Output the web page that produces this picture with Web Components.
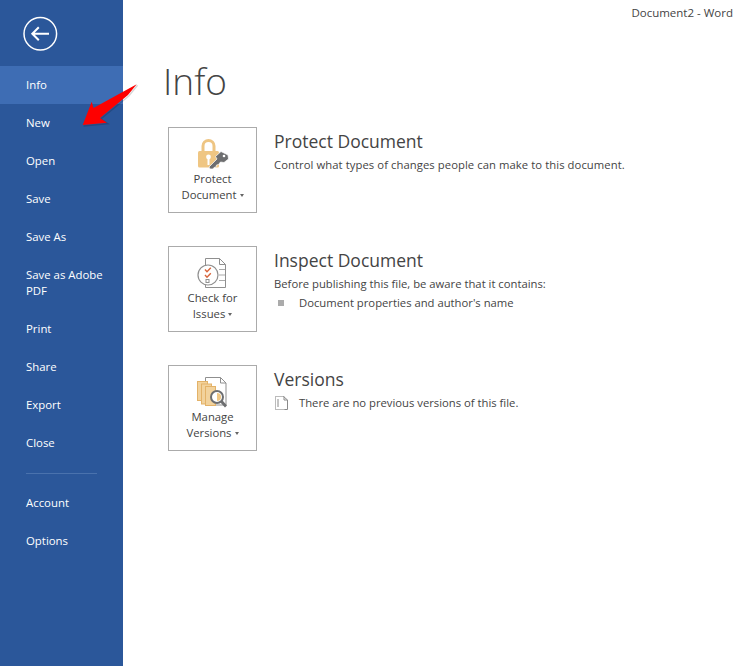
<!DOCTYPE html>
<html><head><meta charset="utf-8"><style>
html,body{margin:0;padding:0;height:100%;background:#fff;overflow:hidden}
body{font-family:"Open Sans","Noto Sans","Liberation Sans",sans-serif;}
</style></head><body>
<info-app>
<back-stage slot="nav">
<nav-item active>Info</nav-item><nav-item>New</nav-item><nav-item>Open</nav-item><nav-item>Save</nav-item><nav-item>Save As</nav-item><nav-item>Save as Adobe PDF</nav-item><nav-item>Print</nav-item><nav-item>Share</nav-item><nav-item>Export</nav-item><nav-item>Close</nav-item>
<nav-rule></nav-rule>
<nav-item>Account</nav-item><nav-item>Options</nav-item>
</back-stage>
<info-section heading="Protect Document" line1="Protect" line2="Document" icon="protect" style="height:119px">
<p-line style="letter-spacing:.07px">Control what types of changes people can make to this document.</p-line>
</info-section>
<info-section heading="Inspect Document" line1="Check for" line2="Issues" icon="inspect" style="height:119px">
<p-line>Before publishing this file, be aware that it contains:</p-line>
<p-line mark="square">Document properties and author's name</p-line>
</info-section>
<info-section heading="Versions" line1="Manage" line2="Versions" icon="versions">
<p-line mark="doc" style="margin-top:1px">There are no previous versions of this file.</p-line>
</info-section>
</info-app>
<script>
const el=(html)=>{const t=document.createElement('template');t.innerHTML=html;return t.content};
class InfoApp extends HTMLElement{constructor(){super();this.attachShadow({mode:'open'}).append(el(`<style>
:host{display:flex;width:747px;height:666px;color:#444;position:relative}
main{flex:1;padding:56px 0 0 40px;min-width:0}
h1{margin:0 0 21px;font-weight:300;font-size:37px;line-height:50px;color:#444}
.title{position:absolute;top:5px;right:14px;font-size:11.5px;line-height:15px;color:#444}
.arrow{position:absolute;left:80px;top:82px;width:60px;height:48px}
.sections{padding-left:5px}
</style><slot name="nav"></slot><main><h1>Info</h1><div class="sections"><slot></slot></div></main>
<div class="title">Document2 - Word</div>
<svg class="arrow" viewBox="0 0 60 48"><path d="M57.500 3.300L48.800 14L20.800 37L27.800 41.700L3.500 44" fill="none" stroke="#000" stroke-opacity=".16" stroke-width="1.400"/><path d="M56.700 2.300L13.500 26L11.700 19.700L2.700 43L27 40.700L20 36L48 13Z" fill="#fe0000"/></svg>`))}}
class BackStage extends HTMLElement{constructor(){super();this.attachShadow({mode:'open'}).append(el(`<style>
:host{display:block;width:123px;height:666px;background:#2b579a;flex:none}
.back{height:66px;display:flex;align-items:flex-start;padding:15px 0 0 23px;box-sizing:border-box}
svg{width:36px;height:37px;display:block}
</style><div class="back"><svg viewBox="0 0 36 37" fill="none" stroke="#fff"><circle cx="17.300" cy="18.700" r="16.300" stroke-width="1.500"/><path d="M9.500 18.700H26M15.800 12.200L9.300 18.700L15.800 25.200" stroke-width="2"/></svg></div><slot></slot>`))}}
class NavItem extends HTMLElement{constructor(){super();this.attachShadow({mode:'open'}).append(el(`<style>
:host{display:block;box-sizing:border-box;padding:11px 14px 11px 26px;font-size:11.4px;line-height:16px;color:#fff}
:host([active]){background:#3e6db4}
</style><slot></slot>`))}}
class NavRule extends HTMLElement{constructor(){super();this.attachShadow({mode:'open'}).append(el(`<style>
:host{display:block;height:1px;margin:11px 26px 10px 26px;background:#4a72ad}
</style>`))}}
const icons={
protect:`<svg width="36" height="34" viewBox="0 0 36 34" style="overflow:visible"><path d="M8 15V9a5.500 5.500 0 0 1 11 0V15" fill="none" stroke="#eec583" stroke-width="3"/><rect x="3" y="14" width="21" height="16.500" rx="1.500" fill="#efc683"/><circle cx="13.500" cy="20" r="2.400" fill="#fff"/><rect x="12.500" y="20" width="2" height="8" fill="#fff"/><path d="M15 32l-1-2 8-8-1.500-2.500 5.500-5 7 3.500.5 4-4.500 3.500-3.500-.5-2 2.500-2 .5-.5 2-2 .5-1 1.500z" fill="#6d6e70" stroke="#fff" stroke-width=".7"/><circle cx="29" cy="19" r="1.300" fill="#fff"/></svg>`,
inspect:`<svg width="36" height="34" viewBox="0 0 36 34" fill="none" style="overflow:visible"><path d="M10.500 2.500H24.500L30.500 8.500V31.500H10.500z" fill="#fff" stroke="#8f8f8f"/><path d="M24.500 2.500V8.500H30.500" stroke="#8f8f8f"/><path d="M24 13.500h6M24 19h6M24 24.500h6" stroke="#a9a9a9"/><circle cx="13" cy="19" r="10" fill="#fff" stroke="#8f8f8f" stroke-width="1.200"/><path d="M10 13.500l2 2.200 3.800-4M10 19l2 2.200 3.800-4" stroke="#d9643a" stroke-width="1.400"/><rect x="11" y="23.500" width="3" height="3" stroke="#8f8f8f"/></svg>`,
versions:`<svg width="36" height="34" viewBox="0 0 36 34" fill="none" style="overflow:visible"><path d="M10.500 2.500H25.500L31 8V30H10.500z" fill="#fff" stroke="#8f8f8f"/><path d="M25.500 2.500V8H31" stroke="#8f8f8f"/><rect x="2.500" y="6.500" width="10" height="19" fill="#f2d29c" stroke="#e3b268"/><rect x="6.500" y="9" width="10" height="20" fill="#f2d29c" stroke="#e3b268"/><rect x="10.500" y="11.500" width="10" height="19" fill="#f2d29c" stroke="#e3b268"/><circle cx="22" cy="22" r="6" fill="#fff" stroke="#6d6e70" stroke-width="2"/><path d="M22 18a4 4 0 0 1 0 8z" fill="#efc683"/><path d="M26.500 26.500l4.500 5" stroke="#6d6e70" stroke-width="2.800"/></svg>`};
class InfoSection extends HTMLElement{constructor(){super();const a=k=>this.getAttribute(k);this.attachShadow({mode:'open'}).append(el(`<style>
:host{display:flex;gap:17px;align-items:flex-start}
.btn{flex:none;box-sizing:border-box;width:89px;height:86px;border:1px solid #ababab;display:flex;flex-direction:column;align-items:center;padding-top:9px;font-size:11.3px;line-height:16px;color:#444;text-align:center}
.btn svg{display:block;margin-bottom:0;flex:none}
.caret{display:inline-block;width:0;height:0;border:2.500px solid transparent;border-top:3px solid #666;border-bottom:0;vertical-align:2px;margin-left:3px}
h2{margin:0 0 1px;font-weight:400;font-size:17.5px;line-height:26px;color:#444}
.body{padding-top:1px}
</style><div class="btn">${icons[a('icon')]}<span>${a('line1')}</span><span>${a('line2')}<i class="caret"></i></span></div><div class="body"><h2>${a('heading')}</h2><slot></slot></div>`))}}
class PLine extends HTMLElement{constructor(){super();const m=this.getAttribute('mark');const mk=m==='square'?`<span class="sq"></span>`:m==='doc'?`<svg width="15" height="15" viewBox="0 0 15 15" fill="none" stroke="#777"><path d="M9.500 1.500H1.500V14.500H12" stroke-dasharray="1 1"/><path d="M9.500 1.500L13.500 5V14.500H10.500M10 1.500V5H13.500M4 4v8" stroke="#8a8a8a"/></svg>`:'';this.attachShadow({mode:'open'}).append(el(`<style>
:host{display:flex;align-items:center;font-size:11.27px;line-height:19px;color:#444}
.m{width:25px;flex:none;display:flex;align-items:center}
.sq{display:block;width:6px;height:6px;background:#ababab;margin-left:4px}
</style>${m?`<span class="m">${mk}</span>`:''}<span><slot></slot></span>`))}}
customElements.define('info-app',InfoApp);customElements.define('back-stage',BackStage);customElements.define('nav-item',NavItem);customElements.define('nav-rule',NavRule);customElements.define('info-section',InfoSection);customElements.define('p-line',PLine);
</script>
</body></html>
